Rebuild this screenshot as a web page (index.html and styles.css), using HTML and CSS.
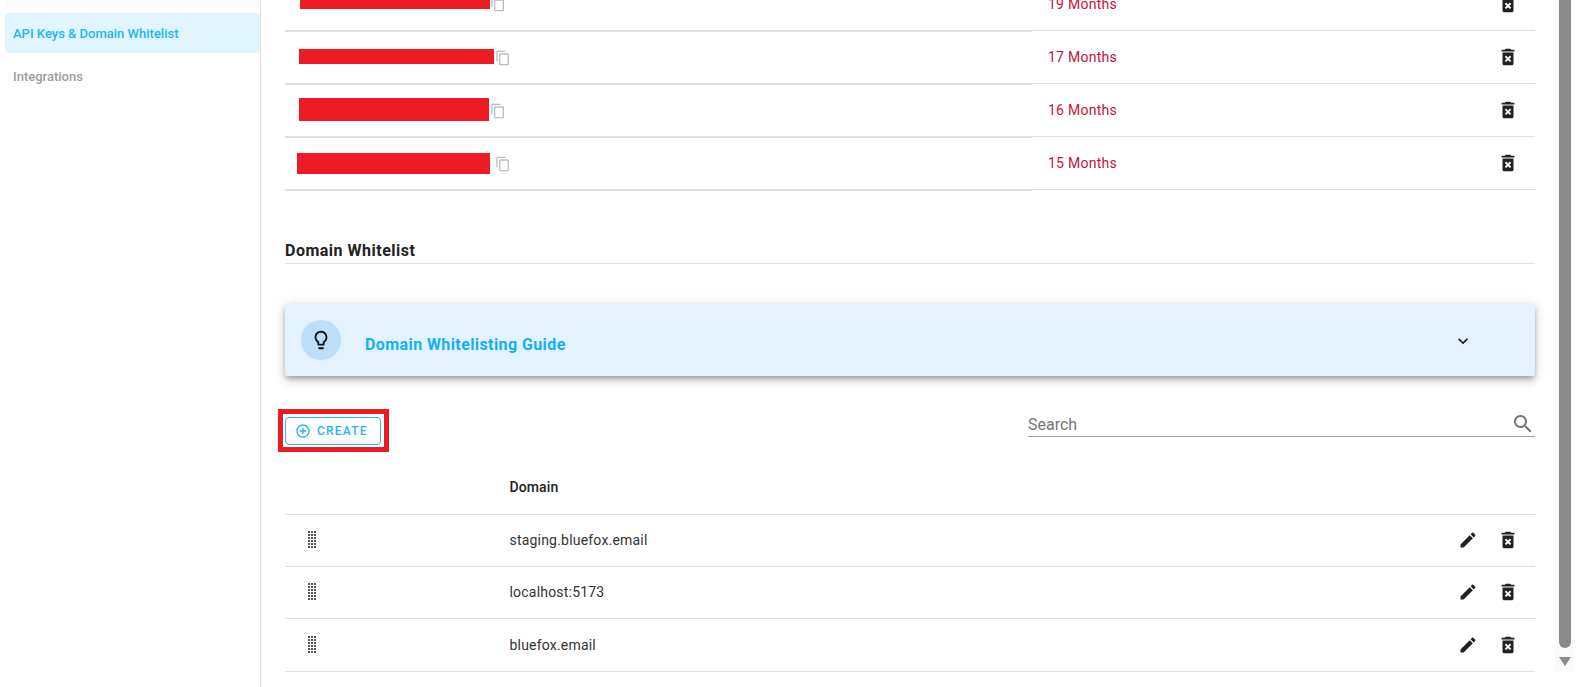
FILE: index.html
```html
<!DOCTYPE html>
<html lang="en">
<head>
<meta charset="utf-8">
<title>API Keys &amp; Domain Whitelist</title>
<link rel="stylesheet" href="styles.css">
</head>
<body>
<svg class="defs" aria-hidden="true">
  <symbol id="i-trash" viewBox="0 0 24 24"><path d="M6 19c0 1.1.9 2 2 2h8c1.1 0 2-.9 2-2V7H6v12zm2.46-7.12 1.41-1.41L12 12.59l2.12-2.12 1.41 1.41L13.41 14l2.12 2.12-1.41 1.41L12 15.41l-2.12 2.12-1.41-1.41L10.59 14l-2.13-2.12zM15.5 4l-1-1h-5l-1 1H5v2h14V4z"/></symbol>
  <symbol id="i-edit" viewBox="0 0 24 24"><path d="M3 17.25V21h3.75L17.81 9.94l-3.75-3.75L3 17.25zM20.71 7.04c.39-.39.39-1.02 0-1.41l-2.34-2.34c-.39-.39-1.02-.39-1.41 0l-1.83 1.83 3.75 3.75 1.83-1.83z"/></symbol>
  <symbol id="i-copy" viewBox="0 0 24 24"><path d="M16 1H4c-1.1 0-2 .9-2 2v14h2V3h12V1zm3 4H8c-1.1 0-2 .9-2 2v14c0 1.1.9 2 2 2h11c1.1 0 2-.9 2-2V7c0-1.1-.9-2-2-2zm0 16H8V7h11v14z"/></symbol>
  <symbol id="i-search" viewBox="0 0 24 24"><path d="M15.5 14h-.79l-.28-.27C15.41 12.59 16 11.11 16 9.5 16 5.91 13.09 3 9.5 3S3 5.91 3 9.5 5.91 16 9.5 16c1.61 0 3.09-.59 4.23-1.57l.27.28v.79l5 4.99L20.49 19l-4.99-5zm-6 0C7.01 14 5 11.99 5 9.5S7.01 5 9.5 5 14 7.01 14 9.5 11.99 14 9.5 14z"/></symbol>
  <symbol id="i-more" viewBox="0 0 24 24"><path d="M16.59 8.59 12 13.17 7.41 8.59 6 10l6 6 6-6z"/></symbol>
  <symbol id="i-bulb" viewBox="0 0 24 24"><path d="M9 21c0 .55.45 1 1 1h4c.55 0 1-.45 1-1v-1H9v1zm3-19C8.14 2 5 5.14 5 9c0 2.38 1.19 4.47 3 5.74V17c0 .55.45 1 1 1h6c.55 0 1-.45 1-1v-2.26c1.81-1.27 3-3.36 3-5.74 0-3.86-3.14-7-7-7zm2.85 11.1-.85.6V16h-4v-2.3l-.85-.6C7.8 12.16 7 10.63 7 9c0-2.76 2.24-5 5-5s5 2.24 5 5c0 1.63-.8 3.16-2.15 4.1z"/></symbol>
  <symbol id="i-add" viewBox="0 0 24 24"><path d="M13 7h-2v4H7v2h4v4h2v-4h4v-2h-4V7zm-1-5C6.48 2 2 6.48 2 12s4.48 10 10 10 10-4.48 10-10S17.52 2 12 2zm0 18c-4.41 0-8-3.59-8-8s3.59-8 8-8 8 3.59 8 8-3.59 8-8 8z"/></symbol>
  <symbol id="i-drag" viewBox="0 0 8 18"><path d="M0 0h2v2H0zM3 0h2v2H3zM6 0h2v2H6zM0 3h2v2H0zM3 3h2v2H3zM6 3h2v2H6zM0 6h2v2H0zM3 6h2v2H3zM6 6h2v2H6zM0 9h2v2H0zM3 9h2v2H3zM6 9h2v2H6zM0 12h2v2H0zM3 12h2v2H3zM6 12h2v2H6zM0 15h2v2H0zM3 15h2v2H3zM6 15h2v2H6z"/></symbol>
</svg>
<div class="app">
  <nav class="sidebar">
    <div class="nav-prev"></div>
    <a class="nav-item nav-active">API Keys &amp; Domain Whitelist</a>
    <a class="nav-item">Integrations</a>
  </nav>
  <main class="main">
    <section class="keys">
      <div class="key-row key-first">
        <div class="key-cell"><span class="mask mask-a"></span><svg class="copy copy-a"><use href="#i-copy"/></svg></div>
        <div class="age-cell"><span class="age">19 Months</span><svg class="ico"><use href="#i-trash"/></svg></div>
      </div>
      <div class="key-row">
        <div class="key-cell"><span class="mask mask-b"></span><svg class="copy copy-b"><use href="#i-copy"/></svg></div>
        <div class="age-cell"><span class="age">17 Months</span><svg class="ico"><use href="#i-trash"/></svg></div>
      </div>
      <div class="key-row">
        <div class="key-cell"><span class="mask mask-c"></span><svg class="copy copy-c"><use href="#i-copy"/></svg></div>
        <div class="age-cell"><span class="age">16 Months</span><svg class="ico"><use href="#i-trash"/></svg></div>
      </div>
      <div class="key-row">
        <div class="key-cell"><span class="mask mask-d"></span><svg class="copy copy-d"><use href="#i-copy"/></svg></div>
        <div class="age-cell"><span class="age">15 Months</span><svg class="ico"><use href="#i-trash"/></svg></div>
      </div>
    </section>

    <h2 class="section-title">Domain Whitelist</h2>

    <div class="guide">
      <span class="guide-badge"><svg class="bulb"><use href="#i-bulb"/></svg></span>
      <span class="guide-title">Domain Whitelisting Guide</span>
      <svg class="chevron"><use href="#i-more"/></svg>
    </div>

    <div class="toolbar">
      <div class="highlight">
        <button class="create"><svg class="create-ico"><use href="#i-add"/></svg>CREATE</button>
      </div>
      <div class="search">
        <span class="search-label">Search</span>
        <svg class="search-ico"><use href="#i-search"/></svg>
      </div>
    </div>

    <div class="dom-head"><span class="dom-col">Domain</span></div>
    <div class="dom-row">
      <svg class="drag"><use href="#i-drag"/></svg>
      <span class="dom-text">staging.bluefox.email</span>
      <svg class="ico ico-edit"><use href="#i-edit"/></svg><svg class="ico"><use href="#i-trash"/></svg>
    </div>
    <div class="dom-row">
      <svg class="drag"><use href="#i-drag"/></svg>
      <span class="dom-text">localhost:5173</span>
      <svg class="ico ico-edit"><use href="#i-edit"/></svg><svg class="ico"><use href="#i-trash"/></svg>
    </div>
    <div class="dom-row dom-last">
      <svg class="drag"><use href="#i-drag"/></svg>
      <span class="dom-text">bluefox.email</span>
      <svg class="ico ico-edit"><use href="#i-edit"/></svg><svg class="ico"><use href="#i-trash"/></svg>
    </div>
  </main>
  <div class="scrollbar">
    <div class="thumb"></div>
    <div class="arrow"></div>
  </div>
</div>
</body>
</html>
```
FILE: styles.css
```css
* { box-sizing: border-box; }
html, body { margin: 0; height: 100%; overflow: hidden; background: #fff; }
body { font-family: Roboto, "Liberation Sans", sans-serif; color: #212121; font-size: 14px; }
.defs { display: none; }
.app { display: flex; height: 687px; }

.sidebar { width: 261px; flex: none; border-right: 1px solid #e0e0e0; padding: 0 0 0 5px; }
.nav-prev { height: 9px; margin-bottom: 4px; background: #fafafa; border-radius: 0 0 4px 4px; }
.nav-item { display: flex; align-items: center; height: 40px; padding-left: 8px; border-radius: 4px; font-size: 13px; font-weight: 500; color: #9e9e9e; }
.nav-active { margin-bottom: 3px; background: #e1f5fe; color: #1eb6f5; }

.main { width: 1250px; flex: none; margin-left: 24px; }
.key-row { display: flex; height: 53px; }
.key-first { height: 31px; }
.key-cell { width: 747px; height: 100%; display: flex; align-items: center; border-bottom: 1px solid #e0e0e0; box-shadow: 0 1px 0 #e0e0e0; }
.key-first .key-cell, .key-first .age-cell { align-items: flex-start; }
.age-cell { flex: 1; height: 100%; display: flex; align-items: center; justify-content: space-between; padding: 0 16px 0 16px; border-bottom: 1px solid #e0e0e0; }
.key-first .age { margin-top: -4px; line-height: 16px; }
.key-first .ico { margin-top: -7px; }
.age { font-size: 14px; letter-spacing: .25px; color: #c2133a; }

.mask { display: block; background: #ed1c24; flex: none; }
.mask-a { width: 190px; height: 9px; margin-left: 15px; }
.mask-b { width: 195px; height: 15px; margin-left: 14px; margin-top: -2px; }
.mask-c { width: 190px; height: 23px; margin-left: 14px; margin-top: -1px; }
.mask-d { width: 193px; height: 21px; margin-left: 12px; margin-top: 1px; }
.copy { width: 16px; height: 16px; fill: #bdbdbd; flex: none; }
.copy-a { margin: -4px 0 0 0; }
.copy-b { margin: 1px 0 0 1px; }
.copy-c { margin: 1px 0 0 1px; }
.copy-d { margin: 1px 0 0 5px; }
.ico { width: 22px; height: 22px; fill: #212121; flex: none; }

.section-title { margin: 52px 0 0; height: 22px; line-height: 18px; font-size: 16px; font-weight: 700; letter-spacing: .5px; border-bottom: 1px solid #e0e0e0; }

.guide { display: flex; align-items: center; height: 72px; margin-top: 40px; padding-left: 16px; background: #e3f2fd; border-radius: 2px; box-shadow: 0 3px 5px -1px rgba(0,0,0,.25), 0 5px 8px 0 rgba(0,0,0,.14), 0 1px 14px 0 rgba(0,0,0,.12); }
.guide-badge { width: 40px; height: 40px; flex: none; border-radius: 50%; background: #bbdefb; display: flex; align-items: center; justify-content: center; }
.bulb { width: 22px; height: 22px; fill: #111; }
.guide-title { flex: 1; margin: 8px 0 0 24px; font-size: 16px; font-weight: 700; color: #13b0f5; letter-spacing: .41px; }
.chevron { width: 20px; height: 20px; fill: #111; margin: 2px 62px 0 0; }

.toolbar { display: flex; justify-content: space-between; align-items: flex-start; margin-top: 33px; }
.highlight { border: 5px solid #ed1c24; width: 111px; height: 43px; margin-left: -7px; padding: 3px 0 0 2px; }
.create { display: flex; align-items: center; width: 96px; height: 28px; padding: 0 0 0 9px; background: #fff; border: 1px solid #1eb6f5; border-radius: 4px; font: 500 12px Roboto, sans-serif; letter-spacing: 1.2px; color: #1eb6f5; }
.create-ico { width: 16px; height: 16px; fill: #1eb6f5; margin-right: 6px; }
.search { display: flex; justify-content: space-between; align-items: center; width: 507px; height: 28px; border-bottom: 1px solid #9e9e9e; padding-top: 3px; }
.search-label { font-size: 16px; color: #757575; }
.search-ico { width: 24px; height: 24px; fill: #757575; }

.dom-head { display: flex; align-items: center; height: 63px; padding-top: 8px; border-bottom: 1px solid #e0e0e0; font-size: 14px; font-weight: 500; letter-spacing: .1px; }
.dom-col { margin-left: 224.5px; }
.dom-row { display: flex; align-items: center; height: 52px; padding: 0 16px 2px 23px; border-bottom: 1px solid #e0e0e0; }
.dom-last { height: 53px; padding-bottom: 1px; }
.dom-text { margin-left: 193.5px; flex: 1; letter-spacing: .2px; color: #333; }
.drag { width: 8px; height: 18px; fill: #555; flex: none; margin-top: 1px; }
.ico-edit { width: 20px; height: 20px; margin-right: 19px; }

.scrollbar { width: 18px; height: 672px; margin-left: 20px; padding-left: 4px; flex: none; background: #fafafa; display: flex; flex-direction: column; }
.thumb { width: 12px; height: 648px; background: #8a8a8a; border-radius: 0 0 6px 6px; }
.arrow { margin-top: 9px; width: 0; height: 0; border-left: 6.5px solid transparent; border-right: 6.5px solid transparent; border-top: 9px solid #8a8a8a; margin-left: -.5px; }
```
